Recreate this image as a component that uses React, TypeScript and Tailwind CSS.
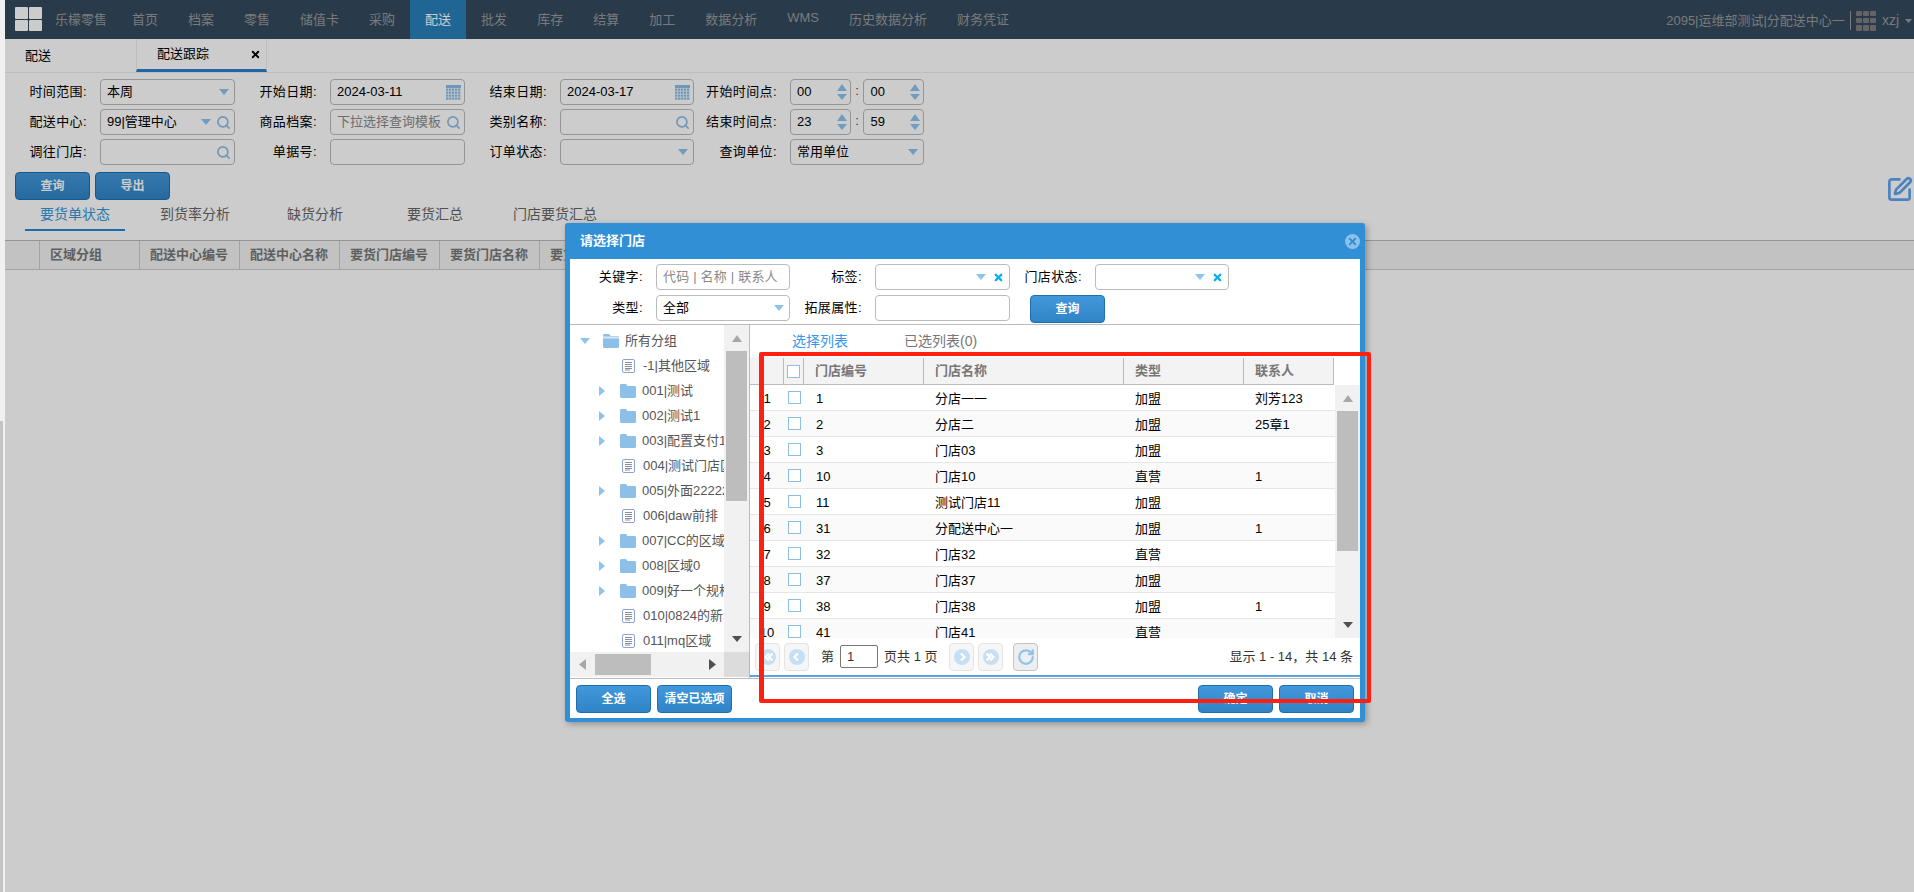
import React from "react";
import { Search, RotateCw, SquarePen, X } from "lucide-react";

const FONT = "font-['Liberation_Sans','Noto_Sans_CJK_SC',sans-serif]";

function TriDown({ className = "fill-[#8cc4ef]" }: { className?: string }) {
  return (
    <svg width="10" height="6" viewBox="0 0 10 6" className={`shrink-0 ${className}`}>
      <path d="M0 0H10L5 6Z" />
    </svg>
  );
}
function TriUp({ className = "fill-[#8cc4ef]" }: { className?: string }) {
  return (
    <svg width="10" height="7" viewBox="0 0 10 7" className={`shrink-0 ${className}`}>
      <path d="M0 7H10L5 0Z" />
    </svg>
  );
}
function TriRight() {
  return (
    <svg width="6" height="10" viewBox="0 0 6 10" className="shrink-0 fill-[#8cc4ef]">
      <path d="M0 0L6 5L0 10Z" />
    </svg>
  );
}
function Mag() {
  return <Search size={15} strokeWidth={2.6} className="shrink-0 text-[#8cbde6]" />;
}
function Calendar() {
  return (
    <svg width="15" height="15" viewBox="0 0 15 15" className="shrink-0">
      <rect x="0" y="0" width="15" height="3" fill="#8cbde6" />
      {[4, 7, 10, 13].map((y) =>
        [0, 3, 6, 9, 12].map((x) => (
          <rect key={`${x}-${y}`} x={x} y={y - 0.5} width="2.4" height="2.2" fill="#8cbde6" />
        ))
      )}
    </svg>
  );
}
function Field({ children, className = "" }: { children?: React.ReactNode; className?: string }) {
  return (
    <div className={`flex h-[26px] items-center rounded-[4px] border border-[#bbb] pl-[6px] pr-[3px] text-[13px] text-black ${className}`}>
      {children}
    </div>
  );
}
function Label({ text }: { text: string }) {
  return <div className="flex h-[26px] items-center justify-end whitespace-nowrap pr-[13px] text-[13px] tracking-[0.4px] text-black">{text}</div>;
}
function Spin({ value }: { value: string }) {
  return (
    <div className="flex h-[26px] w-[61px] items-center rounded-[4px] border border-[#bbb] pl-[6px] pr-[3px] text-[13px] text-black">
      <span className="flex-1">{value}</span>
      <div className="flex flex-col gap-[3px]">
        <TriUp />
        <TriDown />
      </div>
    </div>
  );
}
function SpinPair({ a, b }: { a: string; b: string }) {
  return (
    <div className="flex items-center">
      <Spin value={a} />
      <span className="mb-[3px] w-[13px] text-center text-[13px] text-[#444]">:</span>
      <Spin value={b} />
    </div>
  );
}
function BlueBtn({ text, className = "" }: { text: string; className?: string }) {
  return (
    <button className={`h-[28px] w-[75px] rounded-[4px] border border-[#1f6fae] bg-linear-to-b from-[#4298dc] to-[#2f84c6] text-[12px] font-bold text-white ${className}`}>
      {text}
    </button>
  );
}

const NAV = [
  ["首页", false],
  ["档案", false],
  ["零售", false],
  ["储值卡", false],
  ["采购", false],
  ["配送", true],
  ["批发", false],
  ["库存", false],
  ["结算", false],
  ["加工", false],
  ["数据分析", false],
  ["WMS", false],
  ["历史数据分析", false],
  ["财务凭证", false],
] as const;

function TopBar() {
  return (
    <div className="flex h-[39px] shrink-0 items-stretch bg-[#34495e] text-[13px] text-[#999]">
      <div className="ml-[10px] mt-[7px] grid h-[24px] w-[27px] grid-cols-2 gap-[1px]">
        {[0, 1, 2, 3].map((i) => (
          <div key={i} className="rounded-[1px] bg-white" />
        ))}
      </div>
      <div className="ml-[13px] mr-[10px] flex items-center">乐檬零售</div>
      {NAV.map(([t, active]) => (
        <div key={t} className={active ? "flex items-center bg-[#2980b9] px-[15px] text-white" : "flex items-center px-[15px]"}>
          <span className={t === "WMS" ? "mb-[4px]" : ""}>{t}</span>
        </div>
      ))}
      <div className="ml-auto flex items-center whitespace-nowrap">
        <span className="mt-[2px]">2095|运维部测试|分配送中心一</span>
        <span className="ml-[5px] mt-[1px] h-[19px] w-[1px] bg-[#999]" />
        <div className="ml-[5px] mt-[2px] grid h-[20px] w-[20px] grid-cols-3 gap-[1.5px]">
          {[0, 1, 2, 3, 4, 5, 6, 7, 8].map((i) => (
            <div key={i} className="rounded-[1px] bg-[#7d7d7d]" />
          ))}
        </div>
        <span className="ml-[6px] mt-[1px] text-[14px]">xzj</span>
        <svg width="7" height="4" viewBox="0 0 7 4" className="ml-[6px] mr-[2px] mt-[2px] fill-[#999]">
          <path d="M0 0H7L3.5 4Z" />
        </svg>
      </div>
    </div>
  );
}

function PageTabs() {
  return (
    <div className="flex h-[34px] shrink-0 border-b border-[#eee] text-[13px] text-black">
      <div className="flex w-[131px] items-center pl-[20px]">配送</div>
      <div className="flex w-[131px] items-center border-x border-[#eee] border-b-[3px] border-b-[#2980d0] pl-[20px] pr-[3px]">
        <span className="flex-1">配送跟踪</span>
        <X size={11} strokeWidth={4} className="mr-[2px]" />
      </div>
    </div>
  );
}

function FilterForm() {
  return (
    <div className="grid grid-cols-[80px_135px_95px_135px_95px_134px_96px_134px] gap-y-[4px] pl-[15px] pt-[6px]">
      <Label text="时间范围:" />
      <Field><span className="flex-1">本周</span><TriDown className="mr-[2px] fill-[#8cc4ef]" /></Field>
      <Label text="开始日期:" />
      <Field><span className="flex-1">2024-03-11</span><Calendar /></Field>
      <Label text="结束日期:" />
      <Field><span className="flex-1">2024-03-17</span><Calendar /></Field>
      <Label text="开始时间点:" />
      <SpinPair a="00" b="00" />

      <Label text="配送中心:" />
      <Field><span className="flex-1">99|管理中心</span><TriDown className="mr-[5px] fill-[#8cc4ef]" /><Mag /></Field>
      <Label text="商品档案:" />
      <Field>
        <span className="w-[108px] overflow-hidden whitespace-nowrap text-[#8a8a8a]">下拉选择查询模板</span>
        <span className="flex-1" />
        <Mag />
      </Field>
      <Label text="类别名称:" />
      <Field><span className="flex-1" /><Mag /></Field>
      <Label text="结束时间点:" />
      <SpinPair a="23" b="59" />

      <Label text="调往门店:" />
      <Field><span className="flex-1" /><Mag /></Field>
      <Label text="单据号:" />
      <Field />
      <Label text="订单状态:" />
      <Field><span className="flex-1" /><TriDown className="mr-[2px] fill-[#8cc4ef]" /></Field>
      <Label text="查询单位:" />
      <Field><span className="flex-1">常用单位</span><TriDown className="mr-[2px] fill-[#8cc4ef]" /></Field>
    </div>
  );
}

function SubTabs() {
  const tabs = ["要货单状态", "到货率分析", "缺货分析", "要货汇总", "门店要货汇总"];
  return (
    <div className="flex h-[40px] shrink-0 gap-[20px] pl-[20px] text-[14px] text-[#666]">
      {tabs.map((t, i) => (
        <div
          key={t}
          className={
            i === 0
              ? "flex h-[31px] w-[100px] items-end justify-center whitespace-nowrap border-b-[2px] border-[#2289d8] pb-[4px] text-[#3498db]"
              : "flex h-[31px] w-[100px] items-end justify-center whitespace-nowrap pb-[6px]"
          }
        >
          {t}
        </div>
      ))}
    </div>
  );
}

function MainTableHead() {
  const cols = ["区域分组", "配送中心编号", "配送中心名称", "要货门店编号", "要货门店名称", "要货门店类型"];
  return (
    <div className="flex h-[30px] shrink-0 items-stretch border-y border-t-[#bbb] border-b-[#ccc] bg-[#f3f3f3] text-[13px] font-bold text-[#777]">
      <div className="w-[35px] border-r border-[#ccc]" />
      {cols.map((c) => (
        <div key={c} className="flex w-[100px] items-center whitespace-nowrap border-r border-[#ccc] pl-[10px]">
          {c}
        </div>
      ))}
    </div>
  );
}

function DField({ children, className = "" }: { children?: React.ReactNode; className?: string }) {
  return (
    <div className={`flex h-[26px] items-center rounded-[4px] border border-[#bbb] pl-[6px] pr-[3px] text-[13px] text-black ${className}`}>
      {children}
    </div>
  );
}
function ClearX() {
  return <X size={11} strokeWidth={5} className="ml-[7px] mr-[2px] shrink-0 text-[#00b0f0]" />;
}

function DialogForm() {
  return (
    <div className="grid h-[66px] shrink-0 grid-cols-[86px_134px_85px_135px_85px_134px] gap-y-[3px] border-b border-[#bbb] pt-[5px]">
      <Label text="关键字:" />
      <DField><span className="tracking-[0.2px] text-[#8a8a8a]">代码 | 名称 | 联系人</span></DField>
      <Label text="标签:" />
      <DField><span className="flex-1" /><TriDown /><ClearX /></DField>
      <Label text="门店状态:" />
      <DField><span className="flex-1" /><TriDown /><ClearX /></DField>

      <Label text="类型:" />
      <DField><span className="flex-1">全部</span><TriDown className="mr-[2px] fill-[#8cc4ef]" /></DField>
      <Label text="拓展属性:" />
      <DField />
      <div className="col-span-2 pl-[20px]">
        <BlueBtn text="查询" />
      </div>
    </div>
  );
}

function Folder({ open = false }: { open?: boolean }) {
  return (
    <svg width="16" height="14" viewBox="0 0 16 14" className="shrink-0">
      <path d="M0 1.5C0 .7.7 0 1.5 0H6l1.5 2H14.5C15.3 2 16 2.7 16 3.5V12.5C16 13.3 15.3 14 14.5 14H1.5C.7 14 0 13.3 0 12.5Z" fill="#8cc0e8" />
      {open && <rect x="0" y="2.5" width="16" height="2" fill="#d5e8f7" />}
    </svg>
  );
}
function Doc() {
  return (
    <svg width="13" height="14" viewBox="0 0 13 14" className="shrink-0">
      <rect x=".5" y=".5" width="12" height="13" rx="1.5" fill="#fff" stroke="#8ea3d4" />
      <path d="M3 3.5H10M3 5.5H10M3 7.5H10M3 9.5H10M3 11H8" stroke="#8a8fa0" strokeWidth="1" />
    </svg>
  );
}

const TREE: [string, boolean][] = [
  ["-1|其他区域", false],
  ["001|测试", true],
  ["002|测试1", true],
  ["003|配置支付1门店", true],
  ["004|测试门店区域", false],
  ["005|外面22222222", true],
  ["006|daw前排", false],
  ["007|CC的区域划分", true],
  ["008|区域0", true],
  ["009|好一个规格区域", true],
  ["010|0824的新增区域", false],
  ["011|mq区域", false],
];

function Tree() {
  return (
    <div className="min-w-0 flex-1 overflow-hidden pt-[3px] text-[13px] text-[#555]">
      <div className="flex h-[25px] items-center whitespace-nowrap pl-[10px]">
        <TriDown />
        <span className="w-[13px]" />
        <Folder open />
        <span className="ml-[6px]">所有分组</span>
      </div>
      {TREE.map(([t, folder]) => (
        <div key={t} className="flex h-[25px] items-center whitespace-nowrap">
          {folder ? (
            <div className="ml-[29px] flex items-center">
              <TriRight />
              <span className="w-[15px]" />
              <Folder />
            </div>
          ) : (
            <div className="ml-[52px] mr-[2px] flex items-center">
              <Doc />
            </div>
          )}
          <span className="ml-[6px]">{t}</span>
        </div>
      ))}
    </div>
  );
}

function VScroll({ thumbH, height }: { thumbH: number; height: number }) {
  return (
    <div className="flex w-[25px] shrink-0 flex-col items-center bg-[#f1f1f1]" style={{ height }}>
      <div className="flex h-[26px] w-full shrink-0 items-center justify-center">
        <TriUp className="fill-[#a8a8a8]" />
      </div>
      <div className="w-[21px] shrink-0 bg-[#bdbdbd]" style={{ height: thumbH }} />
      <div className="flex-1" />
      <div className="flex h-[26px] w-full shrink-0 items-center justify-center">
        <TriDown className="fill-[#505050]" />
      </div>
    </div>
  );
}

function LeftPane() {
  return (
    <div className="flex w-[180px] shrink-0 flex-col border-r border-[#bbb]">
      <div className="flex h-[327px] shrink-0">
        <Tree />
        <VScroll thumbH={150} height={327} />
      </div>
      <div className="flex h-[25px] shrink-0 bg-[#f1f1f1]">
        <div className="flex flex-1 items-center">
          <svg width="7" height="11" viewBox="0 0 7 11" className="ml-[9px] shrink-0 fill-[#a8a8a8]"><path d="M7 0V11L0 5.5Z" /></svg>
          <div className="ml-[9px] h-[21px] w-[56px] bg-[#bdbdbd]" />
          <svg width="7" height="11" viewBox="0 0 7 11" className="ml-[58px] shrink-0 fill-[#505050]"><path d="M0 0V11L7 5.5Z" /></svg>
        </div>
        <div className="w-[25px] bg-[#dcdcdc]" />
      </div>
    </div>
  );
}

const ROWS = [
  ["1", "1", "分店一一", "加盟", "刘芳123"],
  ["2", "2", "分店二", "加盟", "25章1"],
  ["3", "3", "门店03", "加盟", ""],
  ["4", "10", "门店10", "直营", "1"],
  ["5", "11", "测试门店11", "加盟", ""],
  ["6", "31", "分配送中心一", "加盟", "1"],
  ["7", "32", "门店32", "直营", ""],
  ["8", "37", "门店37", "加盟", ""],
  ["9", "38", "门店38", "加盟", "1"],
  ["10", "41", "门店41", "直营", ""],
];

function Check() {
  return <div className="h-[13px] w-[13px] shrink-0 border border-[#8dbde3] bg-white" />;
}

function TableHead() {
  return (
    <div className="flex h-[28px] w-[584px] shrink-0 border-y border-t-transparent border-b-[#bbb] bg-[#f3f3f3] text-[13px] font-bold text-[#777]">
      <div className="w-[34px] border-r border-[#bbb]" />
      <div className="flex w-[20px] items-center justify-center border-r border-[#bbb]"><Check /></div>
      <div className="flex w-[120px] items-center border-r border-[#bbb] pl-[11px]">门店编号</div>
      <div className="flex w-[200px] items-center border-r border-[#bbb] pl-[11px]">门店名称</div>
      <div className="flex w-[120px] items-center border-r border-[#bbb] pl-[11px]">类型</div>
      <div className="flex w-[90px] items-center border-r border-[#bbb] pl-[11px]">联系人</div>
    </div>
  );
}

function TableBody() {
  return (
    <div className="flex h-[253px] shrink-0 text-[13px] text-black">
      <div className="h-full w-[585px] overflow-hidden">
        {ROWS.map((r, i) => (
          <div key={r[0]} className={i % 2 ? "flex h-[26px] items-center border-b border-[#e6e6e6] bg-[#fafafa] pt-[2px]" : "flex h-[26px] items-center border-b border-[#e6e6e6] bg-white pt-[2px]"}>
            <div className="w-[34px] text-center">{r[0]}</div>
            <div className="flex w-[20px] justify-center pb-[3px]"><Check /></div>
            <div className="w-[120px] pl-[12px]">{r[1]}</div>
            <div className="w-[200px] pl-[11px]">{r[2]}</div>
            <div className="w-[120px] pl-[11px]">{r[3]}</div>
            <div className="w-[90px] pl-[11px]">{r[4]}</div>
          </div>
        ))}
      </div>
      <VScroll thumbH={140} height={253} />
    </div>
  );
}

function PagerIcon({ dir, double }: { dir: "l" | "r"; double?: boolean }) {
  const d = dir === "l" ? "M9 4.5L5.5 8L9 11.5" : "M7 4.5L10.5 8L7 11.5";
  const d2 = dir === "l" ? "M12.5 4.5L9 8L12.5 11.5" : "M3.5 4.5L7 8L3.5 11.5";
  return (
    <div className="flex h-[28px] w-[25px] shrink-0 items-center justify-center rounded-[4px] border border-[#e4e4e4] bg-[#f6f6f6]">
      <svg width="16" height="16" viewBox="0 0 16 16">
        <circle cx="8" cy="8" r="8" fill="#c5e0f5" />
        <path d={d} stroke="#fff" strokeWidth="2.2" fill="none" />
        {double && <path d={d2} stroke="#fff" strokeWidth="2.2" fill="none" />}
      </svg>
    </div>
  );
}

function Pager() {
  return (
    <div className="flex h-[39px] shrink-0 items-center border-b-[2px] border-[#5ba6e0] bg-white pl-[5px] pr-[7px] text-[13px] text-[#333]">
      <PagerIcon dir="l" double />
      <div className="ml-[4px]"><PagerIcon dir="l" /></div>
      <span className="ml-[12px]">第</span>
      <div className="ml-[6px] flex h-[23px] w-[38px] items-center rounded-[2px] border border-[#777] pl-[6px]">1</div>
      <span className="ml-[6px] whitespace-pre">页共 1 页</span>
      <div className="ml-[12px]"><PagerIcon dir="r" /></div>
      <div className="ml-[4px]"><PagerIcon dir="r" double /></div>
      <div className="ml-[10px] flex h-[28px] w-[25px] shrink-0 items-center justify-center rounded-[4px] border border-[#c4c4c4] bg-[#eeeeee]">
        <RotateCw size={18} strokeWidth={3} className="text-[#8cc4ef]" />
      </div>
      <span className="ml-auto whitespace-pre">显示 1 - 14，共 14 条</span>
    </div>
  );
}

function RightPane() {
  return (
    <div className="flex min-w-0 flex-1 flex-col">
      <div className="flex h-[32px] shrink-0 items-center text-[14px]">
        <span className="ml-[42px] text-[#3498f0]">选择列表</span>
        <span className="ml-[56px] text-[#777]">已选列表(0)</span>
      </div>
      <TableHead />
      <TableBody />
      <Pager />
    </div>
  );
}

function Dialog() {
  return (
    <div className="absolute left-[565px] top-[223px] flex h-[499px] w-[800px] flex-col rounded-[3px] bg-[#318fd6] px-[5px] pb-[4px] shadow-[2px_2px_6px_rgba(0,0,0,0.3)]">
      <div className="flex h-[36px] shrink-0 items-center pl-[10px] text-[13px] font-bold text-white">
        <span className="flex-1">请选择门店</span>
        <div className="flex h-[15px] w-[15px] items-center justify-center rounded-full bg-[#8bc2ec]">
          <X size={11} strokeWidth={4} className="text-[#318fd6]" />
        </div>
      </div>
      <div className="flex flex-1 flex-col bg-white">
        <DialogForm />
        <div className="flex h-[353px] shrink-0">
          <LeftPane />
          <RightPane />
        </div>
        <div className="flex flex-1 items-center justify-between border-t border-[#bbb] px-[6px]">
          <div className="flex gap-[6px]">
            <BlueBtn text="全选" />
            <BlueBtn text="清空已选项" />
          </div>
          <div className="flex gap-[6px]">
            <BlueBtn text="确定" />
            <BlueBtn text="取消" />
          </div>
        </div>
      </div>
    </div>
  );
}

export default function App() {
  return (
    <div className={`relative flex h-[892px] w-[1914px] overflow-hidden bg-white ${FONT}`}>
      <div className="flex w-[5px] shrink-0 flex-col bg-[#f1f1f1]">
        <div className="h-[421px] shrink-0" />
        <div className="w-[3px] flex-1 bg-[#c4c4c4]" />
      </div>
      <div className="relative flex min-w-0 flex-1 flex-col bg-white">
        <TopBar />
        <PageTabs />
        <FilterForm />
        <div className="mt-[7px] flex h-[28px] shrink-0 gap-[5px] pl-[10px]">
          <BlueBtn text="查询" />
          <BlueBtn text="导出" />
          <div className="ml-auto mr-[1px] mt-[4px]">
            <SquarePen size={27} strokeWidth={2.4} className="text-[#5fa4ef]" />
          </div>
        </div>
        <SubTabs />
        <MainTableHead />
        <div className="absolute inset-0 bg-black/20" />
      </div>
      <Dialog />
      <div className="absolute left-[759px] top-[352px] h-[351px] w-[612px] rounded-[2px] border-[4px] border-l-[5px] border-[#ff2010]" />
    </div>
  );
}
